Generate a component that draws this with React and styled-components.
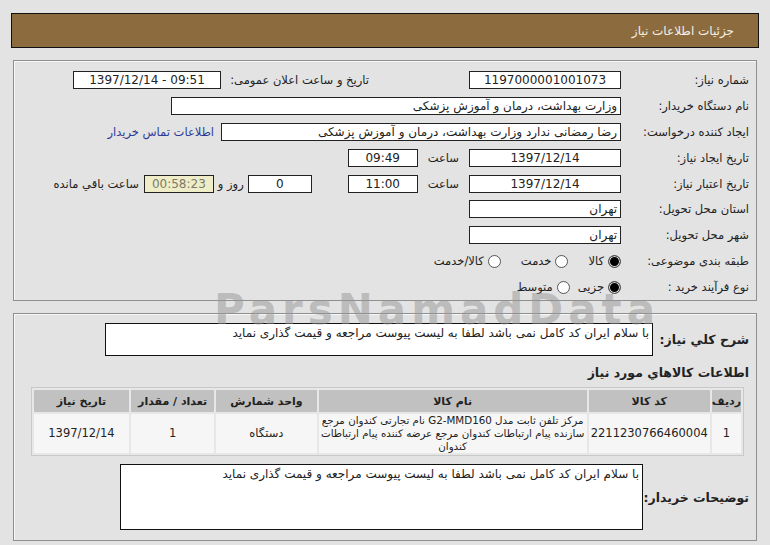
import React from "react";
import styled, { createGlobalStyle } from "styled-components";

const GlobalStyle = createGlobalStyle`
  body {
    margin: 0;
    background: #e3e3e3;
    font-family: "DejaVu Sans", Tahoma, sans-serif;
    font-size: 11px;
    color: #222;
  }
`;

const Page = styled.div`
  position: relative;
  direction: rtl;
  width: 770px;
  height: 545px;
  padding: 13px 13px 0 13px;
  box-sizing: border-box;
  overflow: hidden;
`;

const TitleBar = styled.div`
  height: 33px;
  margin: 0 -2px;
  background: #8c6c3f;
  border: 1px solid #111;
  color: #f3efe6;
  font-size: 12px;
  display: flex;
  align-items: center;
  padding-right: 24px;
`;

const Panel = styled.div`
  margin-top: ${(p) => p.$top || 12}px;
  border: 1px solid #8f8f8f;
  box-shadow: inset 1px 1px 0 #f7f7f7;
  background: #e3e3e3;
  height: ${(p) => p.$height}px;
  box-sizing: border-box;
  padding: ${(p) => p.$pad || "6px 7px 0 0"};
  display: flex;
  flex-direction: column;
`;

const Row = styled.div`
  display: flex;
  align-items: center;
  height: 27px;
`;

const Label = styled.div`
  width: ${(p) => p.$w || 128}px;
  flex: none;
  white-space: nowrap;
  font-size: 11.5px;
  margin-right: ${(p) => p.$mr || 0}px;
`;

const Field = styled.div`
  width: ${(p) => p.$w}px;
  height: 18px;
  flex: none;
  box-sizing: border-box;
  border: 1px solid #222;
  background: ${(p) => (p.$hl ? "#efedc8" : "#fff")};
  color: ${(p) => (p.$hl ? "#7a7a6a" : "#222")};
  direction: ${(p) => (p.$ltr ? "ltr" : "rtl")};
  display: flex;
  align-items: center;
  justify-content: ${(p) => (p.$left ? "flex-start" : "center")};
  padding: 0 3px;
  margin-right: ${(p) => p.$mr || 0}px;
  font-size: 12px;
  white-space: nowrap;
  overflow: hidden;
`;

const Text = styled.span`
  flex: none;
  white-space: nowrap;
  font-size: 11.5px;
  margin-right: ${(p) => p.$mr || 0}px;
  color: ${(p) => p.$color || "#222"};
`;

const RadioDot = styled.span`
  display: inline-block;
  width: 13px;
  height: 13px;
  box-sizing: border-box;
  border-radius: 50%;
  border: 1px solid #555;
  background: ${(p) => (p.$on ? "#000" : "#fff")};
  box-shadow: ${(p) => (p.$on ? "inset 0 0 0 1px #ddd" : "none")};
  margin-left: 4px;
`;

const Radio = styled.span`
  display: inline-flex;
  align-items: center;
  margin-right: ${(p) => p.$mr || 0}px;
  font-size: 11.5px;
  white-space: nowrap;
`;

const BoldLabel = styled.div`
  font-weight: bold;
  font-size: 12.5px;
  white-space: nowrap;
  flex: none;
  width: ${(p) => p.$w || "auto"};
`;

const DescRow = styled.div`
  display: flex;
  align-items: center;
  margin-top: ${(p) => p.$mt || 0}px;
`;

const DescBox = styled.div`
  width: ${(p) => p.$w}px;
  height: ${(p) => p.$h}px;
  box-sizing: border-box;
  border: 1px solid #111;
  background: #fff;
  padding: 2px 3px;
  font-size: 12px;
  white-space: nowrap;
  overflow: hidden;
`;

const SectionTitle = styled.div`
  font-weight: bold;
  font-size: 12.5px;
  margin-top: 9px;
  height: 18px;
`;

const Table = styled.table`
  margin: 4px 5px 0 17px;
  border-collapse: separate;
  border-spacing: 2px;
  background: #e7e7e7;
  border: 1px solid #c9c9c9;
  table-layout: fixed;
  font-size: 11px;
`;

const Th = styled.th`
  background: #c1c1c1;
  height: 22px;
  font-weight: bold;
  font-size: 11px;
  padding: 0;
  width: ${(p) => p.$w}px;
`;

const Td = styled.td`
  background: #f6f6f6;
  height: 39px;
  text-align: center;
  padding: 0 ${(p) => (p.$tight ? 0 : 2)}px;
  line-height: 13px;
  font-size: ${(p) => p.$fs || 11.5}px;
`;

const Watermark = styled.div`
  position: absolute;
  left: 214px;
  top: 285px;
  font-family: "DejaVu Sans", sans-serif;
  font-weight: bold;
  font-size: 42px;
  letter-spacing: 5px;
  color: rgba(150, 150, 150, 0.5);
  direction: ltr;
  pointer-events: none;
`;

export default function App() {
  return (
    <>
      <GlobalStyle />
      <Page>
        <TitleBar>جزئیات اطلاعات نیاز</TitleBar>

        <Panel $height={241}>
          <Row>
            <Label>شماره نیاز:</Label>
            <Field $w={152}>1197000001001073</Field>
            <Label $w={148} $mr={100}>تاریخ و ساعت اعلان عمومی:</Label>
            <Field $w={148} $ltr>1397/12/14 - 09:51</Field>
          </Row>
          <Row>
            <Label>نام دستگاه خریدار:</Label>
            <Field $w={450} $left>وزارت بهداشت، درمان و آموزش پزشکی</Field>
          </Row>
          <Row>
            <Label>ایجاد کننده درخواست:</Label>
            <Field $w={400} $left>رضا  رمضانی ندارد وزارت بهداشت، درمان و آموزش پزشکی</Field>
            <Text $mr={7} $color="#2b3a9a">اطلاعات تماس خریدار</Text>
          </Row>
          <Row>
            <Label>تاریخ ایجاد نیاز:</Label>
            <Field $w={152}>1397/12/14</Field>
            <Text $mr={10}>ساعت</Text>
            <Field $w={70} $mr={10}>09:49</Field>
          </Row>
          <Row>
            <Label>تاریخ اعتبار نیاز:</Label>
            <Field $w={152}>1397/12/14</Field>
            <Text $mr={10}>ساعت</Text>
            <Field $w={70} $mr={10}>11:00</Field>
            <Field $w={64} $mr={36}>0</Field>
            <Text $mr={4}>روز و</Text>
            <Field $w={70} $mr={4} $hl>00:58:23</Field>
            <Text $mr={5}>ساعت باقي مانده</Text>
          </Row>
          <Row>
            <Label>استان محل تحویل:</Label>
            <Field $w={152} $left>تهران</Field>
          </Row>
          <Row>
            <Label>شهر محل تحویل:</Label>
            <Field $w={152} $left>تهران</Field>
          </Row>
          <Row>
            <Label>طبقه بندی موضوعی:</Label>
            <Radio><RadioDot $on />کالا</Radio>
            <Radio $mr={20}><RadioDot />خدمت</Radio>
            <Radio $mr={20}><RadioDot />کالا/خدمت</Radio>
          </Row>
          <Row>
            <Label>نوع فرآیند خرید :</Label>
            <Radio><RadioDot $on />جزیی</Radio>
            <Radio $mr={8}><RadioDot />متوسط</Radio>
          </Row>
        </Panel>

        <Panel $height={228} $top={12} $pad="9px 7px 0 0">
          <DescRow>
            <BoldLabel $w="96px">شرح کلي نياز:</BoldLabel>
            <DescBox $w={548} $h={33}>با سلام ایران کد کامل نمی باشد لطفا به لیست پیوست مراجعه و قیمت گذاری نماید</DescBox>
          </DescRow>
          <SectionTitle>اطلاعات کالاهاي مورد نياز</SectionTitle>
          <Table>
            <thead>
              <tr>
                <Th $w={28}>رديف</Th>
                <Th $w={101}>کد کالا</Th>
                <Th $w={279}>نام کالا</Th>
                <Th $w={103}>واحد شمارش</Th>
                <Th $w={86}>تعداد / مقدار</Th>
                <Th $w={96}>تاریخ نیاز</Th>
              </tr>
            </thead>
            <tbody>
              <tr>
                <Td>1</Td>
                <Td>2211230766460004</Td>
                <Td $fs={10.3} $tight>مرکز تلفن ثابت مدل G2-MMD160 نام تجارتی کندوان مرجع سازنده پیام ارتباطات کندوان مرجع عرضه کننده پیام ارتباطات کندوان</Td>
                <Td>دستگاه</Td>
                <Td>1</Td>
                <Td>1397/12/14</Td>
              </tr>
            </tbody>
          </Table>
          <DescRow $mt={8}>
            <BoldLabel $w="106px">توضیحات خریدار:</BoldLabel>
            <DescBox $w={523} $h={66}>با سلام ایران کد کامل نمی باشد لطفا به لیست پیوست مراجعه و قیمت گذاری نماید</DescBox>
          </DescRow>
        </Panel>

        <Watermark>ParsNamadData</Watermark>
      </Page>
    </>
  );
}
